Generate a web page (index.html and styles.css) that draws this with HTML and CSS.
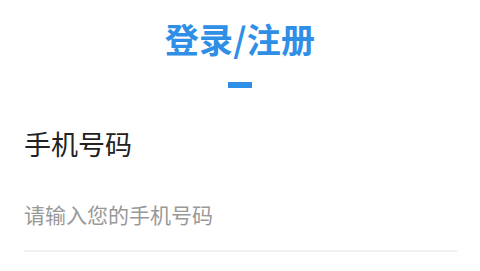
FILE: index.html
```html
<!DOCTYPE html>
<html lang="zh">
<head>
<meta charset="utf-8">
<link rel="stylesheet" href="styles.css">
</head>
<body>
<div class="page">
  <div class="header">
    <h1 class="title">登录/注册</h1>
    <div class="bar"></div>
  </div>
  <div class="form">
    <div class="label">手机号码</div>
    <div class="field">
      <input class="input" type="text" placeholder="请输入您的手机号码">
    </div>
  </div>
</div>
</body>
</html>
```
FILE: styles.css
```css
html, body {
  margin: 0;
  padding: 0;
  background: #ffffff;
}
body {
  font-family: "Noto Sans CJK SC", "Noto Sans", sans-serif;
  width: 480px;
  height: 271px;
  overflow: hidden;
}
.page {
  display: flex;
  flex-direction: column;
}
.header {
  display: flex;
  flex-direction: column;
  align-items: center;
  padding-top: 16px;
}
.title {
  margin: 0;
  font-size: 34px;
  line-height: 46px;
  font-weight: 700;
  color: #2f8ee5;
  letter-spacing: 0.3px;
}
.bar {
  margin-top: 20px;
  width: 24px;
  height: 6px;
  background: #2f8ee5;
}
.form {
  padding: 0 23px 0 24px;
  display: flex;
  flex-direction: column;
}
.label {
  margin-top: 39px;
  font-size: 27px;
  line-height: 34px;
  color: #222222;
}
.field {
  margin-top: 39px;
  border-bottom: 2px solid #f0f0f0;
  padding-bottom: 22px;
}
.input {
  display: block;
  width: 100%;
  border: none;
  outline: none;
  padding: 0;
  margin: 0;
  font-family: "Noto Sans CJK SC", "Noto Sans", sans-serif;
  font-size: 21px;
  line-height: 28px;
  height: 28px;
  color: #333;
  background: transparent;
}
.input::placeholder {
  color: #999999;
}
```
